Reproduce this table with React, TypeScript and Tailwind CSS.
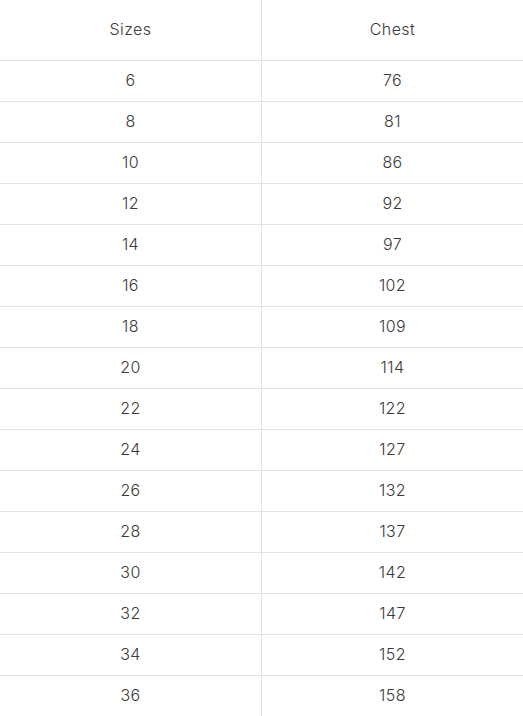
import React from "react";

const rows: [string, string][] = [
  ["6", "76"],
  ["8", "81"],
  ["10", "86"],
  ["12", "92"],
  ["14", "97"],
  ["16", "102"],
  ["18", "109"],
  ["20", "114"],
  ["22", "122"],
  ["24", "127"],
  ["26", "132"],
  ["28", "137"],
  ["30", "142"],
  ["32", "147"],
  ["34", "152"],
  ["36", "158"],
];

export default function App() {
  return (
    <div
      className="w-[523px] h-[716px] overflow-hidden bg-white text-[#3a3a3a] text-[16px] tracking-[0.4px] font-light"
      style={{ fontFamily: "Inter, 'Noto Sans', sans-serif" }}
    >
      <div className="grid grid-cols-[262px_1fr] h-[61px] border-b border-[#e2e2e2]">
        <div className="flex items-center justify-center pb-[2px] border-r border-[#e2e2e2]">Sizes</div>
        <div className="flex items-center justify-center pb-[2px]">Chest</div>
      </div>
      {rows.map(([s, c]) => (
        <div key={s} className="grid grid-cols-[262px_1fr] h-[41px] border-b border-[#e2e2e2]">
          <div className="flex items-center justify-center pb-[2px] border-r border-[#e2e2e2]">{s}</div>
          <div className="flex items-center justify-center pb-[2px]">{c}</div>
        </div>
      ))}
    </div>
  );
}
